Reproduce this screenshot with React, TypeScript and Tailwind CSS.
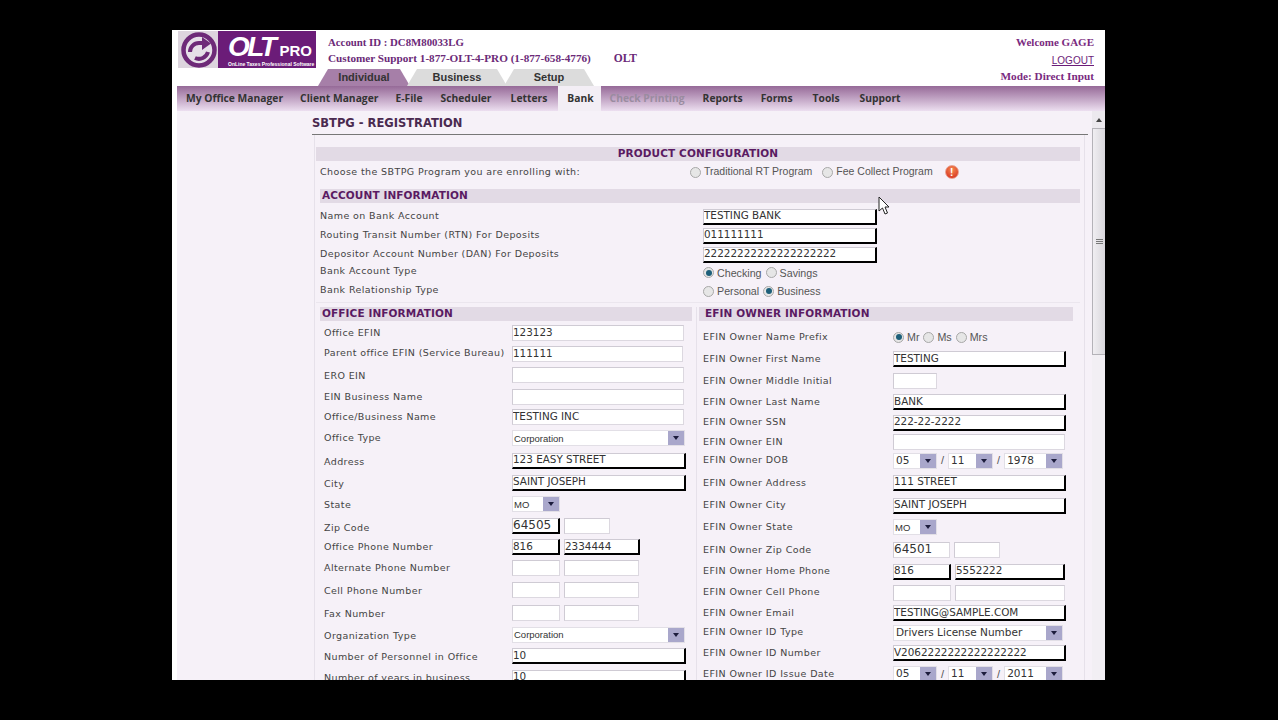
import React from "react";

type Cell =
  | { k: "in"; w: string; v?: string; req?: boolean; big?: boolean }
  | { k: "sel"; w: string; v: string; sm?: boolean }
  | { k: "sep" }
  | { k: "radio"; v: string; on?: boolean };

type Row = { h: string; label: string; cells: Cell[]; lo?: string };

const labelFont = "font-['DejaVu_Sans',sans-serif] text-[9.5px] tracking-[0.4px] text-[#444]";

function Radio({ on }: { on?: boolean }) {
  return (
    <span className="w-[11px] h-[11px] rounded-full border border-[#a8a8a8] bg-[#e6e6e6] flex items-center justify-center shrink-0">
      {on && <span className="w-[6px] h-[6px] rounded-full bg-[#1d5f7a]" />}
    </span>
  );
}

function RadioLabel({ v, on, sm }: { v: string; on?: boolean; sm?: boolean }) {
  return (
    <span className={`flex items-center gap-[3px] font-['Liberation_Sans',sans-serif] ${sm ? "text-[10.5px]" : "text-[10.7px]"} text-[#555]`}>
      <Radio on={on} />
      {v}
    </span>
  );
}

function Inp({ c }: { c: Extract<Cell, { k: "in" }> }) {
  return (
    <input
      readOnly
      value={c.v ?? ""}
      className={`${c.w} h-[16px] bg-white px-0 pb-[2px] outline-none font-['DejaVu_Sans',sans-serif] ${c.big ? "text-[12px]" : "text-[10.4px]"} text-[#333] border-t border-l border-t-[#cfcbd4] border-l-[#cfcbd4] ${
        c.req ? "border-r-2 border-b-2 border-r-black border-b-black" : "border-r border-b border-r-[#dcd8e0] border-b-[#dcd8e0]"
      }`}
    />
  );
}

function Sel({ c }: { c: Extract<Cell, { k: "sel" }> }) {
  return (
    <div className={`${c.w} h-[16px] bg-white border border-[#e2dfe6] flex items-center justify-between`}>
      {c.sm ? (
        <span className="pl-[1px] pt-[2px] font-['Liberation_Sans',sans-serif] text-[#333] text-[9.5px]">{c.v}</span>
      ) : (
        <span className="pl-[2px] font-['DejaVu_Sans',sans-serif] text-[#333] text-[10.5px]">{c.v}</span>
      )}
      <span className="w-[16px] h-full bg-[#a9a7cb] flex items-center justify-center">
        <span className="w-0 h-0 border-l-[3px] border-r-[3px] border-t-[4px] border-l-transparent border-r-transparent border-t-[#1c1c3c]" />
      </span>
    </div>
  );
}

function FormRow({ r, labelW }: { r: Row; labelW: string }) {
  return (
    <div className={`${r.h} flex items-center shrink-0`}>
      <span className={`${labelW} shrink-0 ${labelFont} whitespace-nowrap ${r.lo ?? ""}`}>{r.label}</span>
      <div className="flex items-center gap-[4px]">
        {r.cells.map((c, i) => {
          if (c.k === "in") return <Inp key={i} c={c} />;
          if (c.k === "sel") return <Sel key={i} c={c} />;
          if (c.k === "radio") return <RadioLabel key={i} v={c.v} on={c.on} />;
          return <span key={i} className="text-[11px] text-[#555] font-['Liberation_Sans',sans-serif]">/</span>;
        })}
      </div>
    </div>
  );
}

const full: string = "w-[174px]";
const left: Row[] = [
  { h: "h-[20px]", label: "Office EFIN", cells: [{ k: "in", w: "w-[172px]", v: "123123" }] },
  { h: "h-[21px]", label: "Parent office EFIN (Service Bureau)", cells: [{ k: "in", w: "w-[171px]", v: "111111" }] },
  { h: "h-[22px]", label: "ERO EIN", lo: "pt-[2px]", cells: [{ k: "in", w: "w-[172px]" }] },
  { h: "h-[21px]", label: "EIN Business Name", lo: "pt-[2px]", cells: [{ k: "in", w: "w-[172px]" }] },
  { h: "h-[20px]", label: "Office/Business Name", cells: [{ k: "in", w: "w-[172px]", v: "TESTING INC" }] },
  { h: "h-[22px]", label: "Office Type", cells: [{ k: "sel", w: "w-[173px]", v: "Corporation", sm: true }] },
  { h: "h-[23px]", label: "Address", lo: "pt-[4px]", cells: [{ k: "in", w: full, v: "123 EASY STREET", req: true }] },
  { h: "h-[21px]", label: "City", lo: "pt-[4px]", cells: [{ k: "in", w: full, v: "SAINT JOSEPH", req: true }] },
  { h: "h-[22px]", label: "State", lo: "pt-[2px]", cells: [{ k: "sel", w: "w-[48px]", v: "MO", sm: true }] },
  { h: "h-[22px]", label: "Zip Code", lo: "pt-[4px]", cells: [{ k: "in", w: "w-[48px]", v: "64505", req: true, big: true }, { k: "in", w: "w-[46px]" }] },
  { h: "h-[20px]", label: "Office Phone Number", cells: [{ k: "in", w: "w-[48px]", v: "816", req: true }, { k: "in", w: "w-[76px]", v: "2334444", req: true }] },
  { h: "h-[21px]", label: "Alternate Phone Number", lo: "pt-[2px]", cells: [{ k: "in", w: "w-[48px]" }, { k: "in", w: "w-[75px]" }] },
  { h: "h-[23px]", label: "Cell Phone Number", lo: "pt-[4px]", cells: [{ k: "in", w: "w-[48px]" }, { k: "in", w: "w-[75px]" }] },
  { h: "h-[23px]", label: "Fax Number", lo: "pt-[4px]", cells: [{ k: "in", w: "w-[48px]" }, { k: "in", w: "w-[75px]" }] },
  { h: "h-[21px]", label: "Organization Type", lo: "pt-[4px]", cells: [{ k: "sel", w: "w-[173px]", v: "Corporation", sm: true }] },
  { h: "h-[22px]", label: "Number of Personnel in Office", lo: "pt-[2px]", cells: [{ k: "in", w: full, v: "10", req: true }] },
  { h: "h-[21px]", label: "Number of years in business", lo: "pt-[2px]", cells: [{ k: "in", w: full, v: "10", req: true }] },
];

const right: Row[] = [
  { h: "h-[21px]", label: "EFIN Owner Name Prefix", cells: [{ k: "radio", v: "Mr", on: true }, { k: "radio", v: "Ms" }, { k: "radio", v: "Mrs" }] },
  { h: "h-[22px]", label: "EFIN Owner First Name", cells: [{ k: "in", w: "w-[173px]", v: "TESTING", req: true }] },
  { h: "h-[22px]", label: "EFIN Owner Middle Initial", cells: [{ k: "in", w: "w-[44px]" }] },
  { h: "h-[20px]", label: "EFIN Owner Last Name", cells: [{ k: "in", w: "w-[173px]", v: "BANK", req: true }] },
  { h: "h-[21px]", label: "EFIN Owner SSN", cells: [{ k: "in", w: "w-[173px]", v: "222-22-2222", req: true }] },
  { h: "h-[18px]", label: "EFIN Owner EIN", cells: [{ k: "in", w: "w-[172px]" }] },
  { h: "h-[19px]", label: "EFIN Owner DOB", cells: [{ k: "sel", w: "w-[44px]", v: "05" }, { k: "sep" }, { k: "sel", w: "w-[45px]", v: "11" }, { k: "sep" }, { k: "sel", w: "w-[59px]", v: "1978" }] },
  { h: "h-[25px]", label: "EFIN Owner Address", lo: "pt-[2px]", cells: [{ k: "in", w: "w-[173px]", v: "111 STREET", req: true }] },
  { h: "h-[21px]", label: "EFIN Owner City", cells: [{ k: "in", w: "w-[173px]", v: "SAINT JOSEPH", req: true }] },
  { h: "h-[22px]", label: "EFIN Owner State", cells: [{ k: "sel", w: "w-[44px]", v: "MO", sm: true }] },
  { h: "h-[23px]", label: "EFIN Owner Zip Code", lo: "pt-[2px]", cells: [{ k: "in", w: "w-[57px]", v: "64501", big: true }, { k: "in", w: "w-[46px]" }] },
  { h: "h-[21px]", label: "EFIN Owner Home Phone", cells: [{ k: "in", w: "w-[58px]", v: "816", req: true }, { k: "in", w: "w-[110px]", v: "5552222", req: true }] },
  { h: "h-[21px]", label: "EFIN Owner Cell Phone", cells: [{ k: "in", w: "w-[58px]" }, { k: "in", w: "w-[110px]" }] },
  { h: "h-[20px]", label: "EFIN Owner Email", cells: [{ k: "in", w: "w-[173px]", v: "TESTING@SAMPLE.COM", req: true }] },
  { h: "h-[19px]", label: "EFIN Owner ID Type", cells: [{ k: "sel", w: "w-[170px]", v: "Drivers License Number" }] },
  { h: "h-[22px]", label: "EFIN Owner ID Number", cells: [{ k: "in", w: "w-[173px]", v: "V2062222222222222222", req: true }] },
  { h: "h-[20px]", label: "EFIN Owner ID Issue Date", cells: [{ k: "sel", w: "w-[44px]", v: "05" }, { k: "sep" }, { k: "sel", w: "w-[45px]", v: "11" }, { k: "sep" }, { k: "sel", w: "w-[59px]", v: "2011" }] },
];

const account: Row[] = [
  { h: "h-[19px]", label: "Name on Bank Account", cells: [{ k: "in", w: "w-[174px]", v: "TESTING BANK", req: true }] },
  { h: "h-[19px]", label: "Routing Transit Number (RTN) For Deposits", lo: "pb-[1px]", cells: [{ k: "in", w: "w-[174px]", v: "011111111", req: true }] },
  { h: "h-[19px]", label: "Depositor Account Number (DAN) For Deposits", cells: [{ k: "in", w: "w-[174px]", v: "22222222222222222222", req: true }] },
  { h: "h-[18px]", label: "Bank Account Type", lo: "pb-[4px]", cells: [{ k: "radio", v: "Checking", on: true }, { k: "radio", v: "Savings" }] },
  { h: "h-[19px]", label: "Bank Relationship Type", lo: "pb-[3px]", cells: [{ k: "radio", v: "Personal" }, { k: "radio", v: "Business", on: true }] },
];

const band = "font-['DejaVu_Sans',sans-serif] font-bold text-[10.5px] tracking-[0.1px] text-[#5a1a62] bg-[#e2dae5]";
const navItems: [string, string][] = [
  ["My Office Manager", "text-[#333] px-[9px]"],
  ["Client Manager", "text-[#333] px-[8px]"],
  ["E-File", "text-[#333] px-[9px]"],
  ["Scheduler", "text-[#333] pl-[9px] pr-[10px]"],
  ["Letters", "text-[#333] pl-[9px] pr-[11px]"],
  ["Bank", "text-[#333] bg-[#f3eef5] pl-[9px] pr-[7px]"],
  ["Check Printing", "text-[#9a8ca0] px-[9px]"],
  ["Reports", "text-[#333] px-[9px]"],
  ["Forms", "text-[#333] pl-[9px] pr-[11px]"],
  ["Tools", "text-[#333] pl-[9px] pr-[11px]"],
  ["Support", "text-[#333] px-[9px]"],
];

function Logo() {
  return (
    <div className="w-[138px] h-[37px] bg-[#ddd5de] flex shrink-0">
      <div className="w-[40px] flex items-center justify-center">
        <svg width="38" height="37" viewBox="0 0 38 37">
          <circle cx="20" cy="19" r="15.5" fill="#e6e0e8" stroke="#6e2a78" strokeWidth="4.5" />
          <path d="M11 21a9 9 0 0 1 9-9h4" fill="none" stroke="#6e2a78" strokeWidth="4" />
          <path d="M23 6l9 6.5-9 6.5z" fill="#6e2a78" />
          <path d="M16 27a9.5 9.5 0 0 0 13-6" fill="none" stroke="#6e2a78" strokeWidth="4" />
        </svg>
      </div>
      <div className="flex-1 bg-[#6b1c78] text-white leading-none pl-[10px] pt-[2px] overflow-hidden">
        <div className="flex items-baseline font-['Liberation_Sans',sans-serif] font-bold">
          <span className="italic text-[28px] tracking-[-2.5px]">OLT</span>
          <span className="text-[15px] ml-[5px]">PRO</span>
        </div>
        <div className="text-[5px] font-bold font-['Liberation_Sans',sans-serif] whitespace-nowrap mt-[1px]">OnLine Taxes Professional Software</div>
      </div>
    </div>
  );
}

function Tab({ t, active, w }: { t: string; active?: boolean; w: string }) {
  return (
    <div
      className={`${w} h-[17px] flex items-center justify-center font-['Liberation_Sans',sans-serif] font-bold text-[11px] text-[#333] [clip-path:polygon(0_100%,10px_0,calc(100%-10px)_0,100%_100%)] ${active ? "bg-[#a67fa8]" : "bg-[#dcdcdc]"}`}
    >
      {t}
    </div>
  );
}

export default function App() {
  return (
    <div className="w-[1278px] h-[720px] bg-black overflow-hidden flex justify-start pl-[172px] pt-[30px]">
      <div className="w-[933px] h-[650px] bg-white flex flex-col overflow-hidden">
        {/* header */}
        <div className="h-[56px] bg-white shrink-0 flex pl-[6px] pt-[1px] relative">
          <Logo />
          <div className="ml-[12px] font-['Liberation_Serif',serif] font-bold text-[#6b2a78] leading-[16px] pt-[3px]">
            <div className="text-[10.8px]">Account ID : DC8M80033LG</div>
            <div className="whitespace-nowrap flex text-[11.2px]">
              Customer Support 1-877-OLT-4-PRO (1-877-658-4776)
              <span className="ml-[23px] text-[11.5px]">OLT</span>
            </div>
          </div>
          <div className="absolute right-[11px] top-[4px] text-right font-['Liberation_Serif',serif] font-bold text-[11px] text-[#7a2a80] leading-[17px]">
            <div>Welcome GAGE</div>
            <div className="font-['Liberation_Sans',sans-serif] font-normal text-[10px] leading-[19px] underline text-[#6b1c78]">LOGOUT</div>
            <div className="text-[11.25px] leading-[12px]">Mode: Direct Input</div>
          </div>
          <div className="absolute left-[146px] top-[39px] flex -space-x-[3px]">
            <Tab t="Individual" active w="w-[92px]" />
            <Tab t="Business" w="w-[100px]" />
            <Tab t="Setup" w="w-[90px]" />
          </div>
        </div>
        {/* nav */}
        <div className="h-[25px] ml-[5px] shrink-0 bg-gradient-to-b from-[#966a98] to-[#ecdff0] flex items-stretch font-['Open_Sans',sans-serif] font-bold text-[10.3px]">
          {navItems.map(([n, c]) => (
            <div key={n} className={`${c} flex items-center`}>{n}</div>
          ))}
        </div>
        {/* body */}
        <div className="flex-1 flex min-h-0 ml-[5px] bg-[#f6f1f8]">
          <div className="w-[135px] shrink-0" />
          <div className="flex-1 min-w-0 overflow-hidden">
            <div className="h-[24px] pt-[3px] mr-[4px] border-b border-[#777] flex items-center font-['DejaVu_Sans',sans-serif] font-bold text-[11.5px] text-[#4a2a50]">
              SBTPG - REGISTRATION
            </div>
            <div className="ml-[2px] mr-[7px] border-l border-r border-[#e6e1ea] pl-[1px] pr-[4px] pt-[12px] h-full">
              <div className={`${band} h-[14px] flex items-center justify-center`}>PRODUCT CONFIGURATION</div>
              <div className="h-[22px] flex items-center pl-[4px]">
                <span className={`${labelFont} w-[370px]`}>Choose the SBTPG Program you are enrolling with:</span>
                <div className="flex items-center gap-[10px]">
                  <RadioLabel v="Traditional RT Program" sm />
                  <RadioLabel v="Fee Collect Program" sm />
                  <span className="ml-[2px] w-[14px] h-[14px] rounded-full bg-[radial-gradient(circle_at_50%_30%,#f58a50,#d3261a)] border border-[#e8a090] text-white text-[10px] font-bold flex items-center justify-center font-['Liberation_Sans',sans-serif]">!</span>
                </div>
              </div>
              <div className={`${band} ml-[4px] h-[14px] mt-[6px] flex items-center pl-[2px]`}>ACCOUNT INFORMATION</div>
              <div className="pl-[4px] pt-[4px] pb-[1px] border-b border-[#ebe6ee]">
                {account.map((r) => (
                  <FormRow key={r.label} r={r} labelW="w-[383px]" />
                ))}
              </div>
              <div className="flex pl-[4px] pt-[4px]">
                <div className="w-[372px] shrink-0">
                  <div className={`${band} h-[14px] flex items-center pl-[2px]`}>OFFICE INFORMATION</div>
                  <div className="pl-[4px] pt-[2px]">
                    {left.map((r) => (
                      <FormRow key={r.label} r={r} labelW="w-[188px]" />
                    ))}
                  </div>
                </div>
                <div className="w-[377px] ml-[4px] pl-[2px] shrink-0 border-l border-[#e6e1ea]">
                  <div className={`${band} h-[14px] flex items-center pl-[6px]`}>EFIN OWNER INFORMATION</div>
                  <div className="pl-[4px] pt-[6px]">
                    {right.map((r) => (
                      <FormRow key={r.label} r={r} labelW="w-[190px]" />
                    ))}
                  </div>
                </div>
              </div>
            </div>
          </div>
          {/* scrollbar */}
          <div className="w-[13px] shrink-0 flex flex-col items-stretch bg-[#f2eff4]">
            <div className="h-[17px] flex items-center justify-center bg-[#ece9ee]">
              <span className="w-0 h-0 border-l-[3px] border-r-[3px] border-b-[4px] border-l-transparent border-r-transparent border-b-[#444]" />
            </div>
            <div className="h-[227px] bg-gradient-to-r from-[#f0eef2] to-[#d9d7dc] border border-r-0 border-[#b4b2b8] flex items-center justify-center">
              <div className="flex flex-col gap-[1px] w-[7px]">
                <span className="h-px bg-[#777]" />
                <span className="h-px bg-[#777]" />
                <span className="h-px bg-[#777]" />
              </div>
            </div>
          </div>
        </div>
      </div>
      {/* cursor */}
      <svg className="absolute left-[878px] top-[196px]" width="13" height="20" viewBox="0 0 13 20">
        <path d="M1 1v14l3.5-3 2.5 6 2.5-1-2.5-6H11z" fill="white" stroke="#222" strokeWidth="1" />
      </svg>
    </div>
  );
}
